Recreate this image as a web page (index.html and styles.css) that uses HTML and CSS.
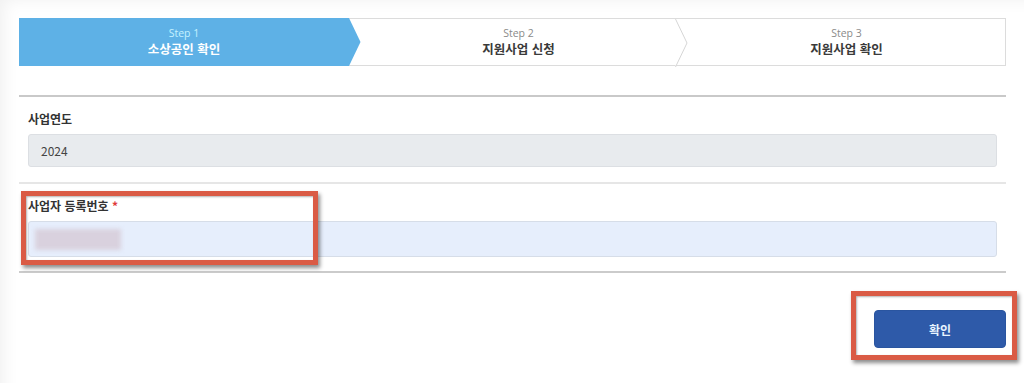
FILE: index.html
```html
<!DOCTYPE html>
<html lang="ko">
<head>
<meta charset="utf-8">
<title>소상공인 확인</title>
<link rel="stylesheet" href="styles.css">
</head>
<body>
<div class="page">
  <div class="stepper">
    <div class="step active">
      <span class="step-no">Step 1</span>
      <span class="step-title">소상공인 확인</span>
      <svg class="chev" width="13" height="48" viewBox="0 0 13 48"><polygon points="0,0 1,0 12.5,24 1,48 0,48" fill="#5eb1e6"/></svg>
    </div>
    <div class="step">
      <span class="step-no">Step 2</span>
      <span class="step-title">지원사업 신청</span>
      <svg class="chev" width="13" height="48" viewBox="0 0 13 48"><polyline points="0.5,0 12,24 0.5,48" fill="#fff" stroke="#d6d6d6" stroke-width="1"/></svg>
    </div>
    <div class="step">
      <span class="step-no">Step 3</span>
      <span class="step-title">지원사업 확인</span>
    </div>
  </div>

  <div class="form">
    <div class="field">
      <label class="label">사업연도</label>
      <div class="input readonly">2024</div>
    </div>
    <div class="field last">
      <label class="label">사업자 등록번호 <span class="req">*</span></label>
      <div class="input filled"><span class="masked"></span></div>
    </div>
  </div>

  <div class="actions">
    <button class="btn">확인</button>
  </div>

  <div class="mark mark-field"></div>
  <div class="mark mark-btn"></div>
</div>
</body>
</html>
```

FILE: styles.css
```css
* { box-sizing: border-box; }
html, body { margin: 0; padding: 0; }
body {
  background: #fff;
  font-family: "Noto Sans CJK KR", "Open Sans", sans-serif;
  color: #333;
}
.page {
  position: relative;
  width: 1024px;
  height: 383px;
  padding: 18px 18px 0 19px;
  background: #fff;
  box-shadow: inset 14px 10px 16px -10px rgba(0,0,0,0.06);
  overflow: hidden;
}
.stepper {
  display: flex;
  height: 48px;
  border: 1px solid #dcdcdc;
  background: #fff;
}
.step {
  position: relative;
  display: flex;
  flex-direction: column;
  align-items: center;
  justify-content: center;
  width: 327px;
  color: #444;
}
.step.active {
  width: 330px;
  margin-top: -1px;
  margin-bottom: -1px;
  margin-left: -1px;
  background: #5eb1e6;
  color: #fff;
}
.step:last-child { flex: 1; padding-left: 12px; }
.step:nth-child(2) { padding-left: 12px; }
.step-no {
  font-family: "Open Sans", "Noto Sans CJK KR", sans-serif;
  font-size: 10.5px;
  line-height: 14px;
  color: #8a8a8a;
}
.step.active .step-no { color: #c4f2ff; }
.step-title {
  font-size: 12.5px;
  font-weight: 700;
  line-height: 18px;
  color: #3a3a3a;
}
.step.active .step-title { color: #fff; }
.chev {
  position: absolute;
  top: 0;
  right: -12px;
  z-index: 2;
}
.step.active .chev { top: 0; }

.form {
  margin-top: 29px;
  border-top: 2px solid #c9c9c9;
  border-bottom: 2px solid #cbcbcb;
}
.field {
  display: flex;
  flex-direction: column;
  padding: 13px 9px 15px 9px;
  border-bottom: 2px solid #e6e6e6;
}
.field.last { border-bottom: none; padding-top: 13px; padding-bottom: 14px; }
.label {
  font-size: 12px;
  font-weight: 700;
  line-height: 18px;
  color: #333;
  margin-bottom: 6px;
}
.req { color: #e03a3a; }
.input {
  display: flex;
  align-items: center;
  height: 33px;
  padding: 0 12px;
  border: 1px solid #dcdfe3;
  border-radius: 3px;
  font-size: 12px;
  color: #444;
}
.input.readonly { background: #e8ebee; }
.input.filled {
  height: 36px;
  padding: 0 6px;
  background: #e6eefc;
  border-color: #d6dde8;
}
.masked {
  display: block;
  width: 86px;
  height: 21px;
  background: #d9d1de;
  filter: blur(2px);
}
.actions {
  display: flex;
  justify-content: flex-end;
  padding-top: 37px;
  padding-right: 0;
}
.btn {
  width: 132px;
  height: 38px;
  border: 1px solid #2a55a0;
  border-radius: 4px;
  background: #2e5aa9;
  color: #e8f4ff;
  font-family: "Noto Sans CJK KR", sans-serif;
  font-size: 12px;
  font-weight: 700;
}
.mark {
  position: absolute;
  border: 5px solid #da5b45;
  box-shadow: 2px 3px 4px rgba(0,0,0,0.45), inset 1px 1px 2px rgba(0,0,0,0.3);
  pointer-events: none;
}
.mark-field { left: 21px; top: 191px; width: 297px; height: 74px; }
.mark-btn { left: 851px; top: 291px; width: 166px; height: 69px; }
```
